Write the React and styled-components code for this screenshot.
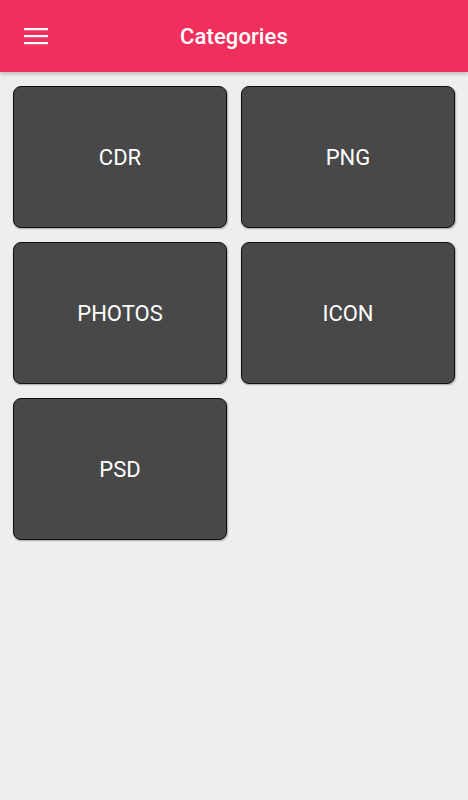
import React from "react";
import styled, { createGlobalStyle } from "styled-components";

const Global = createGlobalStyle`
  html, body { margin: 0; padding: 0; background: #eeeeee; }
  body { font-family: Roboto, "Noto Sans", sans-serif; }
`;

const Screen = styled.div`
  width: 468px;
  min-height: 800px;
  background: #eeeeee;
`;

const AppBar = styled.header`
  height: 72px;
  background: #f0305c;
  box-shadow: 0 2px 4px rgba(0, 0, 0, 0.22);
  display: flex;
  align-items: center;
  position: relative;
  z-index: 1;
`;

const MenuButton = styled.button`
  width: 72px;
  height: 72px;
  padding: 0;
  border: none;
  background: transparent;
  display: flex;
  align-items: center;
  justify-content: center;
  color: #fff;
`;

const Title = styled.h1`
  flex: 1;
  margin: 0 72px 0 0;
  text-align: center;
  color: #fff;
  font-size: 22px;
  font-weight: 500;
  letter-spacing: 0.1px;
`;

const Grid = styled.main`
  display: grid;
  grid-template-columns: 214px 214px;
  grid-auto-rows: 142px;
  gap: 14px;
  padding: 14px 13px;
`;

const Card = styled.button`
  box-sizing: border-box;
  border: 1.5px solid #111;
  border-radius: 8px;
  background: #484848;
  box-shadow: 0.5px 1px 1.5px rgba(0, 0, 0, 0.3);
  color: #fff;
  font-family: Roboto, sans-serif;
  font-size: 22px;
  font-weight: 400;
  display: flex;
  align-items: center;
  justify-content: center;
  padding: 0;
`;

const items = ["CDR", "PNG", "PHOTOS", "ICON", "PSD"];

export default function App() {
  return (
    <Screen>
      <Global />
      <AppBar>
        <MenuButton aria-label="menu">
          <svg width="24" height="24" viewBox="0 0 24 24">
            <rect x="0" y="4" width="24" height="2.2" fill="#fff" />
            <rect x="0" y="11" width="24" height="2.2" fill="#fff" />
            <rect x="0" y="18" width="24" height="2.2" fill="#fff" />
          </svg>
        </MenuButton>
        <Title>Categories</Title>
      </AppBar>
      <Grid>
        {items.map((t) => (
          <Card key={t}>{t}</Card>
        ))}
      </Grid>
    </Screen>
  );
}
